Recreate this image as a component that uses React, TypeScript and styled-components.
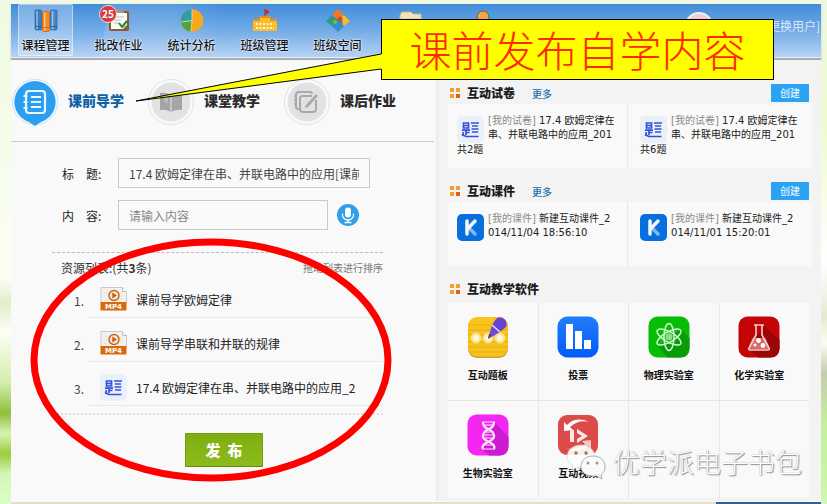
import React from "react";
import styled, { createGlobalStyle } from "styled-components";

const cjk = '"Noto Sans CJK SC", sans-serif';
const mixed = '"DejaVu Sans", "Noto Sans CJK SC", sans-serif';

const GlobalStyle = createGlobalStyle`
  *, *::before, *::after { box-sizing: border-box; }
  body { margin: 0; font-family: ${cjk}; font-size: 12px; color: #222; }
  button, input { font-family: inherit; margin: 0; }
  button { cursor: pointer; padding: 0; border: 0; background: none; color: inherit; }
  h2 { margin: 0; }
  svg { display: block; flex: none; }
`;

const Backdrop = styled.div`
  position: relative;
  display: flex;
  flex-direction: column;
  min-height: 100vh;
  overflow: hidden;
  padding: 4px 6px 0 11px;
  background:
    linear-gradient(180deg, #f0fae0 0%, #fbfff4 55%, #e3eccb 60%, #fbfff6 66%, #d3edaa 76%, #8fbf3c 82%, #d9f3b4 86%, #9ccb3e 90%, #d3f5b4 94%, #dcffc8 100%) left / 11px 100% no-repeat,
    linear-gradient(180deg, #eaf8e0 0%, #effbd0 26%, #ffffff 52%, #e5ead2 63%, #fbfcf2 68%, #c3cdb0 74%, #c5ef9b 84%, #c9f5a5 95%, #d7f5ba 100%) right / 6px 100% no-repeat,
    #f1f9e4;
`;

const Header = styled.header`
  display: flex;
  justify-content: space-between;
  height: 56px;
  padding: 0 1px 0 7px;
  border-bottom: 2px solid #a9adb2;
  background: linear-gradient(100deg, transparent 0 12%, rgba(255, 255, 255, 0.12) 12% 20%, transparent 26%), linear-gradient(#428cda, #6ea8e5 45%, #b8d4f4);
  box-shadow: inset 0 -1px #e6f0fb, 0 1px 2px #c9c9c9;
`;

const Nav = styled.nav`
  display: flex;
  gap: 18px;
`;

const NavButton = styled.button<{ $active?: boolean }>`
  position: relative;
  display: flex;
  flex-direction: column;
  align-items: center;
  gap: 4px;
  width: 55px;
  height: 52px;
  padding-top: 4px;
  border: 1px solid ${(p) => (p.$active ? "rgba(255,255,255,.45)" : "transparent")};
  border-radius: 2px;
  background: ${(p) => (p.$active ? "rgba(255,255,255,.28)" : "none")};
  font-size: 12px;
  font-weight: 500;
  line-height: 18px;
  white-space: nowrap;
  color: #10151c;
  text-shadow: 0 0 2px #fff, 0 0 2px #fff;
`;

const Badge = styled.span`
  position: absolute;
  left: 7px;
  top: 0;
  width: 18px;
  height: 18px;
  border: 1px solid #f6d5d5;
  border-radius: 50%;
  background: #d33a41;
  color: #fff;
  font-size: 10px;
  font-weight: 700;
  line-height: 15px;
  text-align: center;
  text-shadow: none;
`;

const UserBox = styled.div`
  display: flex;
  align-items: flex-start;
  gap: 51px;
  padding-top: 8px;
`;

const UserLink = styled.a`
  padding-top: 5px;
  color: #dce9f8;
  font-size: 12px;
  line-height: 18px;
  text-decoration: none;
`;

const Main = styled.main`
  flex: 1;
  display: grid;
  grid-template-columns: minmax(0, 427fr) minmax(0, 383fr);
  background: #f3f3f3;
`;

const Lesson = styled.section`
  background: #f9f9f9;
  border-right: 2px solid #ececec;
`;

const Tabs = styled.div`
  display: flex;
  height: 82px;
  margin-right: 2px;
  padding-top: 18px;
  border-bottom: 1px solid #ccc;
`;

const Tab = styled.button<{ $active?: boolean }>`
  display: flex;
  align-items: flex-start;
  gap: 9px;
  width: 136px;
  font-size: 14px;
  font-weight: 900;
  line-height: 44px;
  color: ${(p) => (p.$active ? "#0d62a6" : "#2c2c2c")};
`;

const Form = styled.form`
  padding: 16px 53px 0 41px;
`;

const Field = styled.div`
  display: flex;
  align-items: center;
  margin-bottom: 12px;
  padding-left: 10px;
`;

const FieldLabel = styled.label`
  width: 56px;
  color: #222;
`;

const TextInput = styled.input<{ $wide?: boolean }>`
  width: ${(p) => (p.$wide ? "252px" : "210px")};
  height: 30px;
  padding: 0 10px;
  border: 1px solid #c9c9c9;
  border-radius: 0;
  outline: 0;
  background: #f9f9f9;
  color: #444;
  font-size: 12px;
  &::placeholder { color: #888; }
`;

const MicButton = styled.button`
  margin-left: 9px;
`;

const ResourceHead = styled.div`
  display: flex;
  align-items: center;
  justify-content: space-between;
  height: 22px;
  margin-top: 22px;
  padding: 8px 0 0 9px;
  border-top: 1px dashed #bbb;
  color: #333;
`;

const Hint = styled.span`
  color: #777;
  font-size: 10px;
`;

const List = styled.ol`
  list-style: none;
  margin: 0;
  padding: 0 0 7px 22px;
  border-bottom: 2px dotted #ddd;
`;

const ListRow = styled.li`
  display: flex;
  align-items: center;
  height: 44px;
`;

const RowNumber = styled.span`
  width: 14px;
  padding-top: 8px;
  color: #444;
`;

const RowBody = styled.div`
  flex: 1;
  display: flex;
  align-items: center;
  gap: 9px;
  height: 44px;
  padding: 7px 0 0 12px;
  border-bottom: 1px solid #e9e9e9;
  white-space: nowrap;
`;

const PublishButton = styled.button`
  display: block;
  width: 78px;
  height: 34px;
  margin: 18px 0 0 133px;
  border: 1px solid #74a010;
  border-bottom-color: #638c0e;
  border-radius: 1px;
  background: linear-gradient(#7eae10, #8dbb1c);
  color: #fff;
  font-size: 15px;
  font-weight: 900;
  line-height: 30px;
  white-space: pre;
`;

const Side = styled.aside`
  display: flex;
  flex-direction: column;
  gap: 14px;
  padding: 24px 9px 0 10px;
`;

const SectionHead = styled.div`
  display: flex;
  align-items: center;
  height: 20px;
  padding: 0 3px 2px 1px;
`;

const SectionTitle = styled.h2`
  margin: 0 17px 0 6px;
  color: #1c1c1c;
  font-size: 12px;
  font-weight: 900;
  line-height: 18px;
`;

const More = styled.a`
  color: #1b6fa8;
  font-size: 10px;
  font-weight: 500;
  text-decoration: none;
`;

const CreateButton = styled.button`
  width: 38px;
  height: 18px;
  margin-left: auto;
  border-radius: 1px;
  background: #2aa3f5;
  color: #fff;
  font-size: 10px;
  line-height: 18px;
`;

const Cards = styled.div`
  display: grid;
  grid-template-columns: minmax(0, 30fr) minmax(0, 31fr);
  height: 64px;
  background: #f9f9f9;
`;

const Card = styled.article`
  display: grid;
  grid-template-columns: 27px 1fr;
  grid-template-rows: 29px 14px;
  column-gap: 4px;
  padding: 10px 0 0 9px;
  font-family: ${mixed};
  font-size: 10px;
  line-height: 14px;
  white-space: nowrap;
  & + & { padding-left: 12px; border-left: 1px solid #e8e8e8; }
  svg { margin-top: 2px; }
`;

const Owner = styled.span`
  color: #8b8b8b;
`;

const Count = styled.span`
  grid-column: 1 / -1;
`;

const AppGrid = styled.div`
  display: grid;
  grid-template-columns: repeat(4, 1fr);
  grid-auto-rows: 97px;
  gap: 1px;
  margin: 3px 3px 0 0;
  background: #e6e6e6;
`;

const AppCell = styled.button`
  display: flex;
  flex-direction: column;
  align-items: center;
  gap: 10px;
  padding: 13px 10px 0 0;
  background: #f9f9f9;
  color: #111;
  font-size: 10px;
  font-weight: 700;
  line-height: 14px;
`;

const EmptyCell = styled.div`
  background: #f9f9f9;
`;

const Footer = styled.footer`
  height: 3px;
  border-top: 1px solid #fafafa;
  background: linear-gradient(90deg, #e3dfcb 0 87%, #34628e 87%);
`;

const Callout = styled.div`
  position: absolute;
  left: 381px;
  top: 19px;
  width: 393px;
  height: 61px;
  border: 1px solid #000;
  background: #ff0;
  color: #ff2a00;
  font-size: 42px;
  font-weight: 300;
  line-height: 58px;
  text-align: center;
  white-space: nowrap;
`;

const Marks = styled.svg`
  position: absolute;
  left: 0;
  top: 0;
  pointer-events: none;
`;

const Watermark = styled.div`
  position: absolute;
  left: 565px;
  top: 441px;
  display: flex;
  align-items: center;
  gap: 7px;
  color: #fff;
  font-size: 27px;
  font-weight: 300;
  line-height: 42px;
  white-space: nowrap;
  text-shadow: 1px 1px 1px #8d8d8d, 0 0 1px #999;
  pointer-events: none;
`;

/* ---- header icons ---- */

const BooksIcon = () => (
  <svg width="24" height="23" viewBox="0 0 24 23">
    <rect x="1" y="1" width="6.500" height="20" rx="1" fill="#3f7dbd" stroke="#24588f" strokeWidth=".6" />
    <path d="M3 2v18" stroke="#8ebce5" strokeWidth="1.500" />
    <rect x="8.500" y="2.500" width="7" height="20" rx="1" fill="#f58a1d" stroke="#b85b08" strokeWidth=".6" />
    <path d="M10.700 3.500v18" stroke="#ffc680" strokeWidth="1.500" />
    <rect x="16.500" y="1" width="6.500" height="20" rx="1" fill="#4686c6" stroke="#24588f" strokeWidth=".6" />
    <path d="M18.500 2v18" stroke="#9bc6ec" strokeWidth="1.500" />
    <path d="M1 17.500h6.500M16.500 17.500h6.500" stroke="#22588f" strokeWidth=".8" />
    <path d="M8.500 18.500h7" stroke="#c2620c" strokeWidth=".8" />
  </svg>
);

const ClipboardIcon = () => (
  <svg width="24" height="23" viewBox="0 0 24 23">
    <rect x="2" y="2" width="20" height="20" rx="2" fill="#8a5a33" />
    <path d="M4 4h16v12l-4 4H4z" fill="#fbfbf6" />
    <path d="M16 20v-4h4z" fill="#c9c9bd" />
    <rect x="8" y="0" width="9" height="4" rx="1" fill="#9a9a9a" />
    <path d="M8 8h9M7 11h7M7 14h5" stroke="#b8bcc0" />
    <path d="M12 14l3 4 5-6" fill="none" stroke="#1d8a36" strokeWidth="2" />
  </svg>
);

const PieIcon = () => (
  <svg width="24" height="23" viewBox="0 0 24 23">
    <circle cx="12" cy="11.500" r="11.300" fill="#f7a81c" />
    <path d="M12 11.500V.200A11.300 11.300 0 0 0 .8 13z" fill="#2c9fa8" />
    <path d="M12 11.500L.8 13A11.300 11.300 0 0 0 11 22.800z" fill="#55a33a" />
    <path d="M12 .500v11L1 13M12 11.500l-1 11" fill="none" stroke="#e9e1a6" strokeWidth=".8" />
  </svg>
);

const SchoolIcon = () => (
  <svg width="26" height="23" viewBox="0 0 26 23">
    <path d="M13 8V0" stroke="#8a3413" />
    <path d="M13 0l5 3-5 3z" fill="#e0201c" />
    <path d="M8 7h10v4h7v11H1V11h7z" fill="#f9bd2e" />
    <path d="M7 7h12v2H7zM1 10h7v2H1zM18 10h7v2h-7z" fill="#e8901c" />
    <path d="M4 15h18M4 19h18" stroke="#fff7cf" strokeWidth="2" strokeDasharray="2 1.500" />
  </svg>
);

const PuzzleIcon = () => (
  <svg width="24" height="23" viewBox="0 0 24 23">
    <path d="M12 0l6 6-2 2q-3-2-3 2l-1 1-6-5z" fill="#f07a23" />
    <path d="M18 6l6 6-6 5-2-2q2-3-2-3l-2-1 1-1q0-4 3-2z" fill="#f5bd27" />
    <path d="M6 6l6 5-1 2q-3-2-3 1l-2 3-6-5z" fill="#2e9a87" />
    <path d="M6 17l2-3q0-3 3-1l1-2 2 1q4 0 2 3l2 2-6 6z" fill="#328fc6" />
    <circle cx="14" cy="10" r="2.500" fill="#d24822" />
    <circle cx="9" cy="13" r="2" fill="#83b83b" />
  </svg>
);

const FolderIcon = () => (
  <svg width="24" height="23" viewBox="0 0 24 23">
    <path d="M3 3h9l2 2h8v5H1V6z" fill="#efe6bd" stroke="#c5ba8a" />
    <path d="M1 9h22v13H1z" fill="#e6d9a0" />
  </svg>
);

const ContactsIcon = () => (
  <svg width="24" height="23" viewBox="0 0 24 23">
    <circle cx="17" cy="9" r="6" fill="#38a9dc" />
    <circle cx="11" cy="8" r="6" fill="#eba64d" stroke="#915415" />
    <path d="M2 22q1-8 9-8t9 8z" fill="#db6b25" />
  </svg>
);

const Avatar = () => (
  <svg width="28" height="28" viewBox="0 0 28 28">
    <circle cx="14" cy="14" r="13" fill="#f7cbd2" stroke="#e6f0fb" strokeWidth="2" />
  </svg>
);

/* ---- lesson icons ---- */

const PreviewTabIcon = () => (
  <svg width="48" height="50" viewBox="0 0 48 50">
    <circle cx="24" cy="24" r="22.500" fill="#f6fbff" stroke="#c1e1f7" />
    <path d="M24 3a21 21 0 0 1 6 41l-6 4-6-4A21 21 0 0 1 24 3z" fill="#2b9ef0" />
    <rect x="15" y="13" width="19" height="22" rx="3" fill="none" stroke="#e9f6ff" strokeWidth="2.200" />
    <path d="M20 19h10M20 24h10M20 29h10M12.500 18h4M12.500 24h4M12.500 30h4" stroke="#e9f6ff" strokeWidth="1.800" />
  </svg>
);

const ClassTabIcon = () => (
  <svg width="48" height="50" viewBox="0 0 48 50">
    <circle cx="24" cy="24" r="22.500" fill="#fafafa" stroke="#e2e2e2" />
    <circle cx="24" cy="24" r="19.500" fill="#e2e2e2" />
    <path d="M13 15q6-1 11 2v17q-5-3-11-2zM35 15q-6-1-11 2v17q5-3 11-2z" fill="#a5a5a5" />
    <path d="M24 17v17" stroke="#e5e5e5" />
    <path d="M17 16v9l2-2 2 3v-9" fill="#bcbcbc" />
  </svg>
);

const HomeworkTabIcon = () => (
  <svg width="48" height="50" viewBox="0 0 48 50">
    <circle cx="24" cy="24" r="22.500" fill="#fafafa" stroke="#e2e2e2" />
    <circle cx="24" cy="24" r="19.500" fill="#e2e2e2" />
    <path d="M17 31h-2q-2 0-2-2V17q0-3 3-3h11q2 0 2 2" fill="none" stroke="#a9a9a9" strokeWidth="2" />
    <path d="M33 22v9q0 3-3 3H20q-3 0-3-3V20q0-2 3-2h9" fill="none" stroke="#a9a9a9" strokeWidth="2" />
    <path d="M22 30l1-3 10-11 2 2-10 11z" fill="#a9a9a9" />
    <path d="M11 18h3M11 22h3M11 26h3" stroke="#a9a9a9" strokeWidth="1.500" />
  </svg>
);

const MicIcon = () => (
  <svg width="22" height="22" viewBox="0 0 22 22">
    <circle cx="11" cy="11" r="11" fill="#2f9fe8" />
    <rect x="8" y="3.500" width="6" height="10" rx="3" fill="#fff" />
    <path d="M5.500 9.500v1.500a5.500 5 0 0 0 11 0V9.500M11 16v2.500M7.500 18.500h7" fill="none" stroke="#fff" strokeWidth="1.300" />
  </svg>
);

const Mp4Icon = () => (
  <svg width="27" height="24" viewBox="0 0 27 24">
    <path d="M1 .5h21.500l4 4V16H1z" fill="#f4f2f0" stroke="#c9c9c9" />
    <path d="M22.500.5v4h4" fill="#fff" stroke="#bbb" />
    <path d="M4 6h19M4 9h19M4 12h19" stroke="#f2dfd6" />
    <circle cx="14" cy="8.500" r="5" fill="#f8e8da" stroke="#bf6516" strokeWidth="1.400" />
    <path d="M12.300 5.500l4.700 3-4.700 3z" fill="#c45e0d" />
    <path d="M.5 15h26v8.500H.5z" fill="#db6a0c" />
    <text x="13.500" y="22" textAnchor="middle" fontFamily="DejaVu Sans" fontWeight="700" fontSize="7" fill="#fff">MP4</text>
  </svg>
);

const TopicIcon = () => (
  <svg width="27" height="27" viewBox="0 0 27 27">
    <rect width="27" height="27" rx="5" fill="#e9f0f8" />
    <path d="M6.500 7h5v5h-5zM6.500 9.500h5M5 14.200h8M9 14v5M9 16.500h3.500M6.500 16l-1 4M6 19l3 1.500h12.500M14 7h8M15 10h6M14.500 13h7M15 16h6" fill="none" stroke="#3650dc" strokeWidth="1.700" />
  </svg>
);

const KIcon = () => (
  <svg width="27" height="27" viewBox="0 0 27 27">
    <rect width="27" height="27" rx="5" fill="#086fdf" />
    <path d="M10 7v13" stroke="#fff" strokeWidth="3.400" strokeLinecap="round" />
    <path d="M12 14l6 6" stroke="#83b8ef" strokeWidth="3.400" strokeLinecap="round" />
    <path d="M10.500 15L18 7" stroke="#edf6ff" strokeWidth="3.400" strokeLinecap="round" />
  </svg>
);

const SquaresIcon = () => (
  <svg width="12" height="12" viewBox="0 0 12 12">
    <path d="M1 1h4v4H1zM7 1h4v4H7zM1 7h4v4H1z" fill="#f99c2c" />
    <path d="M7 7h4v4H7z" fill="#e4600d" />
  </svg>
);

/* ---- teaching software icons ---- */

const BoardIcon = () => (
  <svg width="42" height="42" viewBox="0 0 42 42">
    <rect x="1" y="2" width="40" height="40" rx="9" fill="#c9a233" />
    <rect x="1" y="1" width="40" height="39.500" rx="9" fill="#f9c31d" />
    <path d="M2 9h38M1 14h40M1 19h40M1 26h40M1 31h40M3 36h36" stroke="#e7ad17" />
    <g fill="#fff9df" stroke="#fbe38b" strokeWidth="2.500">
      <circle cx="9" cy="22" r="4.200" />
      <circle cx="21" cy="22" r="4.200" />
      <circle cx="33" cy="22" r="4.200" />
    </g>
    <path d="M21 23l4-14 8 7z" fill="#6d4ae0" />
    <path d="M25 9l4-6q3-3 7-1 5 3 3 9l-6 5z" fill="#6544d2" />
    <path d="M25 9l8 7" stroke="#f0e8ff" strokeWidth="1.200" />
    <path d="M21 23l3-4-2-1z" fill="#49352d" />
  </svg>
);

const VoteIcon = () => (
  <svg width="42" height="42" viewBox="0 0 42 42">
    <defs>
      <linearGradient id="vote" x2="0" y2="1">
        <stop stopColor="#227dfa" />
        <stop offset="1" stopColor="#005cf8" />
      </linearGradient>
    </defs>
    <rect x=".5" y=".5" width="41" height="41" rx="10" fill="url(#vote)" />
    <path d="M9 8h7v25H9zM18 15h7v18h-7zM27 24h7v9h-7z" fill="#fff" />
  </svg>
);

const AtomIcon = () => (
  <svg width="42" height="42" viewBox="0 0 42 42">
    <rect x=".5" y=".5" width="41" height="41" rx="9" fill="#08bd05" />
    <path d="M33 13l8.500 9v10q0 9.500-9 9.500H19L10 30z" fill="#079c08" />
    <g fill="none" stroke="#d5f7d3" strokeWidth="1.500">
      <ellipse cx="21" cy="21" rx="5" ry="13.500" />
      <ellipse cx="21" cy="21" rx="5" ry="13.500" transform="rotate(60 21 21)" />
      <ellipse cx="21" cy="21" rx="5" ry="13.500" transform="rotate(120 21 21)" />
    </g>
    <circle cx="21" cy="21" r="3.500" fill="#8be18a" />
  </svg>
);

const FlaskIcon = () => (
  <svg width="42" height="42" viewBox="0 0 42 42">
    <rect x=".5" y=".5" width="41" height="41" rx="9" fill="#c30505" />
    <path d="M26 10l15.500 14v8q0 9.500-9 9.500H20L11 33z" fill="#9a0505" />
    <path d="M14.500 22h13l4.500 11H10z" fill="#d96a6a" />
    <path d="M18 9v10l-7 13q-1 2 1 2h18q2 0 1-2l-7-13V9M16 9h10" fill="none" stroke="#f6d0d0" strokeWidth="1.600" />
    <circle cx="20.500" cy="24.500" r="2.400" fill="#fff" />
    <circle cx="17" cy="29" r="1.500" fill="#fff" />
    <circle cx="25" cy="29.500" r="2.400" fill="#fff" />
  </svg>
);

const DnaIcon = () => (
  <svg width="42" height="42" viewBox="0 0 42 42">
    <rect x=".5" y=".5" width="41" height="41" rx="9" fill="#f326f2" />
    <path d="M27 8l14.500 15v9q0 9.500-9 9.500H22L15 35z" fill="#cf1bd0" />
    <g fill="none" stroke="#fde2fd">
      <path d="M16 8q0 5 5 7t6 6-6 7-5 7M27 8q0 5-5 7t-6 6 6 7 5 7" strokeWidth="2.300" />
      <path d="M15 8h13M17 11h9M18 18h8M17 21h9M18 24h8M17 31h9M15 35h13" strokeWidth="1.200" />
    </g>
  </svg>
);

const VideoIcon = () => (
  <svg width="42" height="42" viewBox="0 0 42 42">
    <rect x="1" y="1" width="40" height="40" rx="9" fill="#dd4a4a" />
    <path d="M7 8v9l9-1-3-3q9-8 19-5Q19 2 10 11z" fill="#fff" />
    <path d="M34 35v-9l-9 1 3 3q-9 7-19 4 13 7 22-2z" fill="#f6caca" />
    <path d="M13 16h4v12h-4zM20 15l11 7-11 7v-4l5-3-5-3z" fill="#fbe9e9" />
  </svg>
);

const ChatBubbles = () => (
  <svg width="41" height="42" viewBox="0 0 41 42">
    <path d="M16 4c8 0 14 5 14 12s-6 11-14 11l-4-1-6 3 2-5C4 22 2 19 2 16 2 9 8 4 16 4z" fill="#fff" fillOpacity=".9" stroke="#ccc" strokeWidth=".6" />
    <circle cx="11" cy="12" r="1.700" fill="#8d7474" />
    <circle cx="21" cy="12" r="1.700" fill="#8d7474" />
    <path d="M28 15c7 0 12 4 12 11 0 4-2 6-4 8l1 4-5-3h-4c-7 0-12-4-12-9 0-7 5-11 12-11z" fill="#fafafa" stroke="#999" strokeWidth=".8" />
    <circle cx="23" cy="22" r="1.500" fill="#999" />
    <circle cx="32" cy="22" r="1.500" fill="#999" />
  </svg>
);

const navItems = [
  { label: "课程管理", Icon: BooksIcon, active: true },
  { label: "批改作业", Icon: ClipboardIcon, badge: 25 },
  { label: "统计分析", Icon: PieIcon },
  { label: "班级管理", Icon: SchoolIcon },
  { label: "班级空间", Icon: PuzzleIcon },
];

const tabs = [
  { label: "课前导学", Icon: PreviewTabIcon, active: true },
  { label: "课堂教学", Icon: ClassTabIcon },
  { label: "课后作业", Icon: HomeworkTabIcon },
];

const resources = [
  { name: "课前导学欧姆定律", Icon: Mp4Icon },
  { name: "课前导学串联和并联的规律", Icon: Mp4Icon },
  { name: "17.4 欧姆定律在串、并联电路中的应用_2", Icon: TopicIcon },
];

const sections = [
  {
    title: "互动试卷",
    Icon: TopicIcon,
    owner: "[我的试卷]",
    cards: [
      { first: "17.4 欧姆定律在", second: "串、并联电路中的应用_201", count: "共2题" },
      { first: "17.4 欧姆定律在", second: "串、并联电路中的应用_201", count: "共6题" },
    ],
  },
  {
    title: "互动课件",
    Icon: KIcon,
    owner: "[我的课件]",
    cards: [
      { first: "新建互动课件_2", second: "014/11/04 18:56:10", count: "" },
      { first: "新建互动课件_2", second: "014/11/01 15:20:01", count: "" },
    ],
  },
];

const apps = [
  { label: "互动题板", Icon: BoardIcon },
  { label: "投票", Icon: VoteIcon },
  { label: "物理实验室", Icon: AtomIcon },
  { label: "化学实验室", Icon: FlaskIcon },
  { label: "生物实验室", Icon: DnaIcon },
  { label: "互动视频", Icon: VideoIcon },
];

export default function App() {
  return (
    <Backdrop>
      <GlobalStyle />
      <Header>
        <Nav>
          {navItems.map(({ label, Icon, active, badge }) => (
            <NavButton key={label} type="button" $active={active}>
              <Icon />
              {label}
              {badge && <Badge>{badge}</Badge>}
            </NavButton>
          ))}
          <NavButton type="button" aria-label="folder"><FolderIcon /></NavButton>
          <NavButton type="button" aria-label="contacts"><ContactsIcon /></NavButton>
        </Nav>
        <UserBox>
          <Avatar />
          <UserLink href="#user">[更换用户]</UserLink>
        </UserBox>
      </Header>

      <Main>
        <Lesson>
          <Tabs>
            {tabs.map(({ label, Icon, active }) => (
              <Tab key={label} type="button" $active={active}>
                <Icon />
                {label}
              </Tab>
            ))}
          </Tabs>
          <Form onSubmit={(e) => e.preventDefault()}>
            <Field>
              <FieldLabel htmlFor="title">标　题:</FieldLabel>
              <TextInput id="title" $wide defaultValue="17.4 欧姆定律在串、并联电路中的应用[课前" />
            </Field>
            <Field>
              <FieldLabel htmlFor="content">内　容:</FieldLabel>
              <TextInput id="content" placeholder="请输入内容" />
              <MicButton type="button" aria-label="microphone"><MicIcon /></MicButton>
            </Field>
            <ResourceHead>
              <span>资源列表:(共<b>3</b>条)</span>
              <Hint>拖动列表进行排序</Hint>
            </ResourceHead>
            <List>
              {resources.map(({ name, Icon }, i) => (
                <ListRow key={name}>
                  <RowNumber>{i + 1}.</RowNumber>
                  <RowBody>
                    <Icon />
                    {name}
                  </RowBody>
                </ListRow>
              ))}
            </List>
            <PublishButton type="submit">{"发  布"}</PublishButton>
          </Form>
        </Lesson>

        <Side>
          {sections.map(({ title, Icon, owner, cards }) => (
            <section key={title}>
              <SectionHead>
                <SquaresIcon />
                <SectionTitle>{title}</SectionTitle>
                <More href="#more">更多</More>
                <CreateButton type="button">创建</CreateButton>
              </SectionHead>
              <Cards>
                {cards.map(({ first, second, count }, i) => (
                  <Card key={i}>
                    <Icon />
                    <div>
                      <Owner>{owner}</Owner> {first}
                      <br />
                      {second}
                    </div>
                    {count && <Count>{count}</Count>}
                  </Card>
                ))}
              </Cards>
            </section>
          ))}
          <section>
            <SectionHead>
              <SquaresIcon />
              <SectionTitle>互动教学软件</SectionTitle>
            </SectionHead>
            <AppGrid>
              {apps.map(({ label, Icon }) => (
                <AppCell key={label} type="button">
                  <Icon />
                  {label}
                </AppCell>
              ))}
              <EmptyCell />
              <EmptyCell />
            </AppGrid>
          </section>
        </Side>
      </Main>
      <Footer />

      <Watermark>
        <ChatBubbles />
        优学派电子书包
      </Watermark>
      <Callout>课前发布自学内容</Callout>
      <Marks width="400" height="490" viewBox="0 0 400 490">
        <path d="M382 54L136 101L382 69z" fill="#ff0" />
        <path d="M381 54L136 101L381 69" fill="none" stroke="#000" />
        <ellipse cx="211" cy="360" rx="177" ry="118" fill="none" stroke="#f00" strokeWidth="7" />
      </Marks>
    </Backdrop>
  );
}
